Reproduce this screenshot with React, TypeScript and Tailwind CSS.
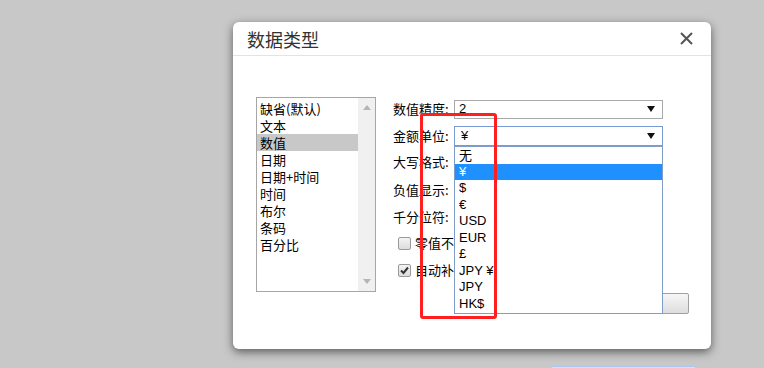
import React from "react";

const cjk = { fontFamily: '"Noto Sans CJK SC", "Liberation Sans", sans-serif' };
const latin = { fontFamily: '"Liberation Sans", "Noto Sans CJK SC", sans-serif' };

const listItems = ["缺省(默认)", "文本", "数值", "日期", "日期+时间", "时间", "布尔", "条码", "百分比"];
const options = ["无", "¥", "$", "€", "USD", "EUR", "£", "JPY ¥", "JPY", "HK$"];

function Arrow() {
  return (
    <svg width="8" height="6" viewBox="0 0 8 6" className="mr-[7px]">
      <path d="M0 0 H8 L4 6 Z" fill="#111" />
    </svg>
  );
}

function Checkbox({ checked }: { checked?: boolean }) {
  return (
    <div className="w-[13px] h-[13px] rounded-[2px] border border-[#9a9a9a] bg-gradient-to-b from-[#f4f4f4] to-[#dcdcdc] flex items-center justify-center">
      {checked && (
        <svg width="9" height="9" viewBox="0 0 9 9">
          <path d="M1 4.5 L3.5 7 L8 1.5" stroke="#333" strokeWidth="2" fill="none" />
        </svg>
      )}
    </div>
  );
}

export default function App() {
  return (
    <div className="relative w-[764px] h-[368px] bg-[#c8c8c8] overflow-hidden" style={cjk}>
      <div className="pl-[233px] pt-[22px]">
        <div className="relative w-[478px] h-[327px] bg-white rounded-[6px] shadow-[0_3px_10px_rgba(0,0,0,0.55)]">
          <div className="h-[34px] border-b border-[#e3e3e3] flex items-center justify-between pl-[14px] pr-[18px]">
            <span className="text-[18px] text-[#333] leading-none">数据类型</span>
            <svg width="13" height="13" viewBox="0 0 13 13">
              <path d="M1 1 L12 12 M12 1 L1 12" stroke="#555" strokeWidth="2" />
            </svg>
          </div>
          <div className="flex pt-[41px] pl-[23px]">
            <div className="w-[120px] h-[195px] border border-[#a6a6a6] flex">
              <div className="flex-1 pt-[2px]">
                {listItems.map((t, i) => (
                  <div
                    key={t}
                    className={`h-[17px] leading-[17px] pl-[3px] text-[13px] text-black ${i === 2 ? "bg-[#c8c8c8]" : ""}`}
                  >
                    {t}
                  </div>
                ))}
              </div>
              <div className="w-[17px] bg-[#f0f0f0] flex flex-col items-center justify-between py-[7px]">
                <svg width="8" height="5" viewBox="0 0 8 5"><path d="M0 5 L4 0 L8 5 Z" fill="#b5b5b5" /></svg>
                <svg width="8" height="5" viewBox="0 0 8 5"><path d="M0 0 L4 5 L8 0 Z" fill="#b5b5b5" /></svg>
              </div>
            </div>
            <div className="ml-[17px] w-[296px] pt-[2px] text-[13px] text-black">
              <div className="h-[20px] flex items-center">
                <span className="w-[61px]">数值精度:</span>
                <div className="w-[209px] h-[19px] border border-[#a9a9a9] flex items-center justify-between pl-[4px]" style={latin}>
                  <span>2</span>
                  <Arrow />
                </div>
              </div>
              <div className="h-[20px] mt-[7px] flex items-center">
                <span className="w-[61px]">金额单位:</span>
                <div className="relative w-[209px] h-[20px] border border-[#7a9ad6] flex items-center justify-between pl-[6px]" style={latin}>
                  <span>¥</span>
                  <Arrow />
                  <div className="absolute left-[-1px] top-[19px] w-[209px] h-[168px] bg-white border border-[#7f9dc9] z-10 pt-[0px]">
                    {options.map((o, i) => (
                      <div
                        key={o}
                        className={`h-[16.5px] leading-[16.5px] pl-[4px] text-[13px] ${i === 1 ? "bg-[#1e90ff] text-white" : "text-black"}`}
                        style={i === 0 ? cjk : latin}
                      >
                        {o}
                      </div>
                    ))}
                  </div>
                </div>
              </div>
              <div className="h-[20px] mt-[6px] flex items-center">大写格式:</div>
              <div className="h-[20px] mt-[8px] flex items-center">负值显示:</div>
              <div className="h-[20px] mt-[7px] flex items-center">千分位符:</div>
              <div className="h-[20px] mt-[6px] flex items-center pl-[5px] gap-[4px]">
                <Checkbox />
                <span>零值不显示</span>
              </div>
              <div className="h-[20px] mt-[7px] flex items-center pl-[5px] gap-[4px]">
                <Checkbox checked />
                <span>自动补零</span>
              </div>
              <div className="mt-[13px] flex justify-end">
                <div className="w-[126px] h-[21px] border border-[#a0a0a0] rounded-[2px] bg-gradient-to-b from-[#f6f6f6] to-[#dedede]" />
              </div>
            </div>
          </div>
        </div>
      </div>
      <div className="absolute z-20 left-[420px] top-[113px] w-[77px] h-[206px] border-[3px] border-[#ff1f1f] rounded-[3px]" />
      <div className="absolute left-[552px] top-[366px] w-[143px] h-[2px] bg-[#cfe2f7] border-t border-[#a9c9ee]" />
    </div>
  );
}
